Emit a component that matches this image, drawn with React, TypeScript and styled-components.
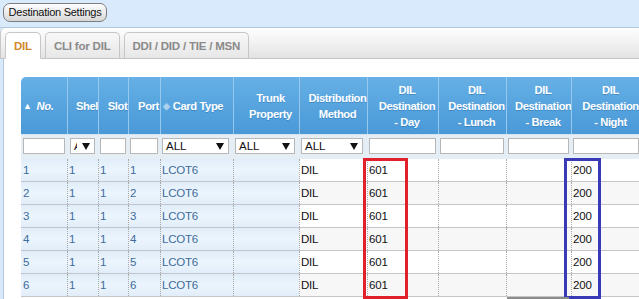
import React from 'react';
import styled, { createGlobalStyle } from 'styled-components';

const Global = createGlobalStyle`
  html, body { margin: 0; padding: 0; }
  body {
    background: #d8eafb;
    font-family: "Liberation Sans", Arial, sans-serif;
    width: 639px;
    height: 299px;
    overflow: hidden;
  }
  * { box-sizing: border-box; }
`;

const COLS = '46px 31px 30px 32px 73px 66px 68px 71px 68px 65px 70px';

const Page = styled.div`
  display: flex;
  flex-direction: column;
  height: 299px;
`;

const TopBar = styled.div`
  height: 27px;
  padding: 3px 0 0 3px;
  display: flex;
  align-items: flex-start;
`;

const SettingsButton = styled.button`
  width: 104px;
  height: 19px;
  padding: 0;
  border: 1px solid #7e7e7e;
  border-radius: 7px;
  background: linear-gradient(#fdfdfd, #e9e9e9 55%, #d6d6d6);
  font-family: "Liberation Sans", Arial, sans-serif;
  font-size: 11px;
  letter-spacing: -0.25px;
  color: #111;
  line-height: 17px;
`;

const Panel = styled.div`
  flex: 1;
  display: flex;
  flex-direction: column;
  border-top: 1px solid #afc7dc;
  min-height: 0;
`;

const TabBar = styled.div`
  height: 31px;
  padding: 4px 0 0 4px;
  display: flex;
  align-items: flex-end;
  gap: 4px;
  background: linear-gradient(#fefefe, #f4f4f4 40%, #e3e3e3);
  border-bottom: 1px solid #c5c5c5;
  border-left: 1px solid #c8c8c8;
  border-top-left-radius: 5px;
`;

const Tab = styled.div<{ $active?: boolean }>`
  height: 27px;
  margin-bottom: -1px;
  padding: 0 8px;
  display: flex;
  align-items: center;
  border: 1px solid #c6c6c6;
  border-bottom-color: ${(p) => (p.$active ? '#ffffff' : '#c5c5c5')};
  border-radius: 5px 5px 0 0;
  background: ${(p) => (p.$active ? '#ffffff' : 'linear-gradient(#f8f8f8, #e7e7e7)')};
  color: ${(p) => (p.$active ? '#d2872d' : '#8a8a8a')};
  font-size: 11.5px;
  letter-spacing: -0.2px;
  font-weight: bold;
  white-space: nowrap;
`;

const Content = styled.div`
  flex: 1;
  background: #ffffff;
  border-left: 3px solid #d8e9f9;
  box-shadow: inset 1px 0 0 #b2c7da;
  padding: 18px 0 0 18px;
  overflow: hidden;
`;

const TableWrap = styled.div`
  position: relative;
  width: 620px;
`;

const HeaderRow = styled.div`
  display: grid;
  grid-template-columns: ${COLS};
  height: 57px;
  background: linear-gradient(#66b0e5, #58a5df 45%, #4a99d7);
  border-top-left-radius: 5px;
`;

const HeaderCell = styled.div<{ $first?: boolean; $sort?: boolean }>`
  position: relative;
  display: flex;
  flex-direction: column;
  justify-content: center;
  overflow: hidden;
  white-space: nowrap;
  text-align: center;
  padding-left: ${(p) => (p.$sort ? '2px' : '8px')};
  border-left: ${(p) => (p.$first ? 'none' : '1px solid #97c9ee')};
  color: #ffffff;
  font-size: 11.2px;
  letter-spacing: -0.4px;
  font-weight: bold;
  line-height: 16px;
  text-shadow: 0 1px 0 rgba(0, 60, 120, 0.25);
`;

const HeaderLine = styled.div`
  width: 100%;
`;

const Italic = styled.span`
  font-style: italic;
`;

const SortMark = styled.span<{ $dim?: boolean }>`
  position: absolute;
  left: 2px;
  top: 50%;
  transform: translateY(-50%);
  font-size: 9px;
  line-height: 10px;
  color: ${(p) => (p.$dim ? 'rgba(255,255,255,0.5)' : '#ffffff')};
  text-shadow: none;
`;

const FilterRow = styled.div`
  display: grid;
  grid-template-columns: ${COLS};
  height: 25px;
  background: #e5edf5;
  border-top: 1px solid #d7e3ee;
`;

const FilterCell = styled.div`
  padding: 3px 2px 0 2px;
  overflow: hidden;
`;

const TextBox = styled.div`
  height: 16px;
  border: 1px solid #b7b7b7;
  background: #ffffff;
`;

const SelectBox = styled.div<{ $narrow?: boolean }>`
  height: 16px;
  margin: 0 ${(p) => (p.$narrow ? '1px 0 1px' : '2px 0 0')};
  border: 1px solid #b7b7b7;
  background: #ffffff;
  display: flex;
  align-items: center;
  overflow: hidden;
`;

const SelectText = styled.span`
  flex: 1;
  min-width: 0;
  overflow: hidden;
  padding-left: 3px;
  font-size: 11.5px;
  color: #111;
  white-space: nowrap;
`;

const SelectArrow = styled.span`
  flex: 0 0 17px;
  height: 100%;
  background: #ffffff;
  display: flex;
  align-items: center;
  justify-content: center;
`;

const DataRow = styled.div`
  display: grid;
  grid-template-columns: ${COLS};
  height: 23px;
  border-bottom: 1px solid #c2c6ca;
`;

const DataCell = styled.div<{ $tint?: boolean; $first?: boolean; $even?: boolean }>`
  display: flex;
  align-items: center;
  padding-left: ${(p) => (p.$first ? '2px' : '1px')};
  border-left: ${(p) => (p.$first ? 'none' : '1px dotted #a9a9a9')};
  overflow: hidden;
  white-space: nowrap;
  font-size: 11.5px;
  letter-spacing: -0.2px;
  color: ${(p) => (p.$tint ? '#3d6b9b' : '#111111')};
  background: ${(p) =>
    p.$tint
      ? 'linear-gradient(#e0edf9, #ecf5fd 50%, #e1edf9)'
      : p.$even
      ? '#f7f7f7'
      : '#ffffff'};
`;

const Highlight = styled.div<{ $color: string; $left: number; $width: number }>`
  position: absolute;
  left: ${(p) => p.$left}px;
  top: 81px;
  width: ${(p) => p.$width}px;
  height: 141px;
  border: 3px solid ${(p) => p.$color};
  pointer-events: none;
`;

const ScrollThumb = styled.div`
  position: absolute;
  left: 486px;
  top: 220px;
  width: 62px;
  height: 3px;
  background: #8c8c8c;
`;

const Arrow = () => (
  <svg width="8" height="7" viewBox="0 0 8 7">
    <polygon points="0,0 8,0 4,7" fill="#111" />
  </svg>
);

const Select = ({ narrow }: { narrow?: boolean }) => (
  <SelectBox $narrow={narrow}>
    <SelectText>ALL</SelectText>
    <SelectArrow>
      <Arrow />
    </SelectArrow>
  </SelectBox>
);

type Row = {
  no: number;
  shelf: string;
  slot: string;
  port: string;
  card: string;
  trunk: string;
  method: string;
  day: string;
  lunch: string;
  brk: string;
  night: string;
};

const rows: Row[] = [1, 2, 3, 4, 5, 6].map((n) => ({
  no: n,
  shelf: '1',
  slot: '1',
  port: String(n),
  card: 'LCOT6',
  trunk: '',
  method: 'DIL',
  day: '601',
  lunch: '',
  brk: '',
  night: '200',
}));

const headers: { lines: React.ReactNode[]; sort?: 'up' | 'both' }[] = [
  { lines: [<Italic key="n">No.</Italic>], sort: 'up' },
  { lines: ['Shelf'] },
  { lines: ['Slot'] },
  { lines: ['Port'] },
  { lines: ['Card Type'], sort: 'both' },
  { lines: ['Trunk', 'Property'] },
  { lines: ['Distribution', 'Method'] },
  { lines: ['DIL', 'Destination', '- Day'] },
  { lines: ['DIL', 'Destination', '- Lunch'] },
  { lines: ['DIL', 'Destination', '- Break'] },
  { lines: ['DIL', 'Destination', '- Night'] },
];

const filters: ('text' | 'select' | 'narrow')[] = [
  'text', 'narrow', 'text', 'text', 'select', 'select', 'select', 'text', 'text', 'text', 'text',
];

export default function App() {
  return (
    <Page>
      <Global />
      <TopBar>
        <SettingsButton>Destination Settings</SettingsButton>
      </TopBar>
      <Panel>
        <TabBar>
          <Tab $active>DIL</Tab>
          <Tab>CLI for DIL</Tab>
          <Tab>DDI / DID / TIE / MSN</Tab>
        </TabBar>
        <Content>
          <TableWrap>
            <HeaderRow>
              {headers.map((h, i) => (
                <HeaderCell key={i} $first={i === 0} $sort={!!h.sort}>
                  {h.sort && <SortMark $dim={h.sort === 'both'}>{h.sort === 'up' ? '▲' : '◆'}</SortMark>}
                  {h.lines.map((l, j) => (
                    <HeaderLine key={j}>{l}</HeaderLine>
                  ))}
                </HeaderCell>
              ))}
            </HeaderRow>
            <FilterRow>
              {filters.map((f, i) => (
                <FilterCell key={i}>
                  {f === 'text' ? <TextBox /> : <Select narrow={f === 'narrow'} />}
                </FilterCell>
              ))}
            </FilterRow>
            {rows.map((r, i) => {
              const even = i % 2 === 1;
              const cells = [r.no, r.shelf, r.slot, r.port, r.card, r.trunk, r.method, r.day, r.lunch, r.brk, r.night];
              return (
                <DataRow key={r.no}>
                  {cells.map((c, j) => (
                    <DataCell key={j} $first={j === 0} $tint={j < 6} $even={even}>
                      {c}
                    </DataCell>
                  ))}
                </DataRow>
              );
            })}
            <Highlight $color="#e0212b" $left={342} $width={45} />
            <Highlight $color="#3a3ab6" $left={543} $width={37} />
            <ScrollThumb />
          </TableWrap>
        </Content>
      </Panel>
    </Page>
  );
}
